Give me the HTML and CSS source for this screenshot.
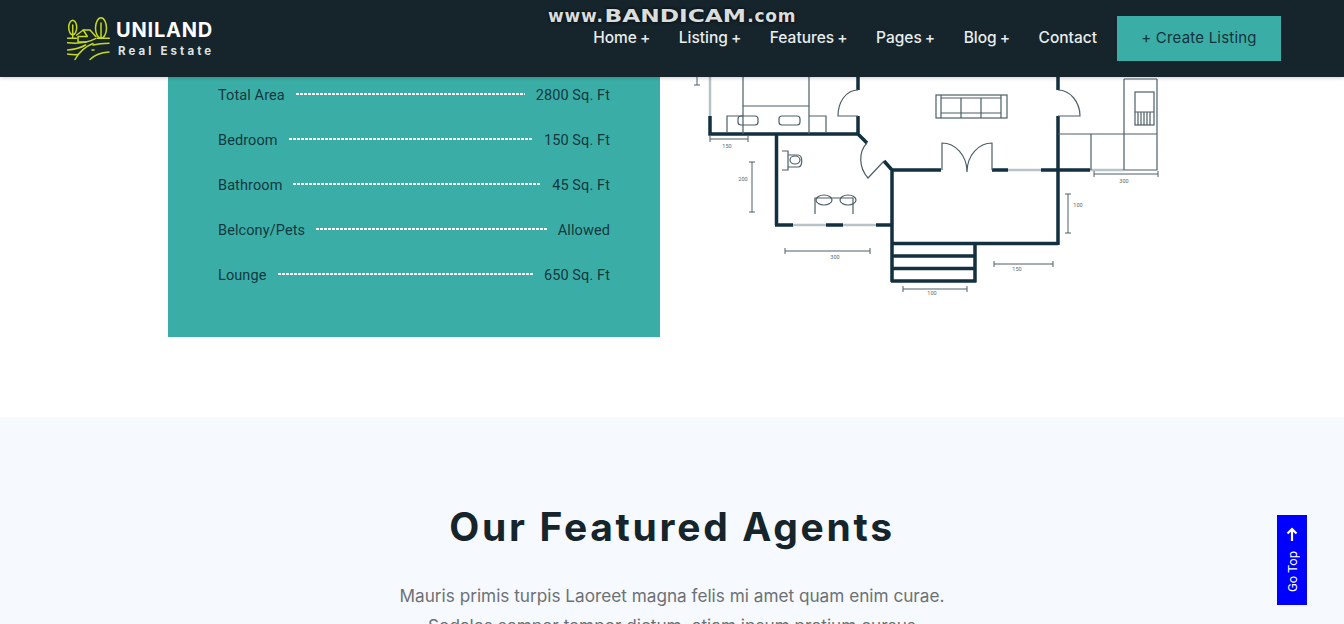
FILE: index.html
```html
<!DOCTYPE html>
<html lang="en">
<head>
    <meta charset="UTF-8">
    <meta name="viewport" content="width=device-width, initial-scale=1.0">
    <title>Uniland Real Estate</title>
    <link rel="stylesheet" href="styles.css">
</head>
<body>
    <header class="site-header">
        <a class="logo" href="#">
            <svg class="logo-icon" viewBox="0 0 44 44" fill="none" stroke="#c6d91c" stroke-width="1.500" stroke-linecap="round" stroke-linejoin="round">
                <ellipse cx="5.700" cy="10.500" rx="4" ry="7.300"></ellipse>
                <path d="M5.700 8v13"></path>
                <ellipse cx="34" cy="11" rx="5.500" ry="10.200"></ellipse>
                <path d="M34 6v15"></path>
                <path d="M9.700 18l6.600-5H23l6 6.700"></path>
                <path d="M16.300 13l4 6.500H11v5.500h8"></path>
                <path d="M0.500 21.300h9M30 21.300h12.300"></path>
                <path d="M0.500 25.700c9 1 19 .5 28-4"></path>
                <path d="M26 28c5-1.200 10-1.700 16-1.700"></path>
                <path d="M0.500 33c6-.5 13-2 18-5"></path>
                <path d="M0.500 37c4 .5 7 1 10 .5"></path>
                <path d="M8 42.500c4-7 10-13 18-16"></path>
                <path d="M23 42.500c4-4 11-7 19-7.500"></path>
                <path d="M25 33h2"></path>
            </svg>
            <span class="logo-text">
                <strong>UNILAND</strong>
                <small>Real Estate</small>
            </span>
        </a>
        <nav class="main-nav">
            <a href="#">Home<i>+</i></a>
            <a href="#">Listing<i>+</i></a>
            <a href="#">Features<i>+</i></a>
            <a href="#">Pages<i>+</i></a>
            <a href="#">Blog<i>+</i></a>
            <a href="#">Contact</a>
        </nav>
        <a class="create-btn" href="#">+ Create Listing</a>
        <div class="watermark"><b>www.</b><b class="brand">BANDICAM</b><b>.com</b></div>
    </header>

    <section class="plan-section">
        <div class="area-panel">
            <div class="area-row"><span>Total Area</span><i></i><span>2800 Sq. Ft</span></div>
            <div class="area-row"><span>Bedroom</span><i></i><span>150 Sq. Ft</span></div>
            <div class="area-row"><span>Bathroom</span><i></i><span>45 Sq. Ft</span></div>
            <div class="area-row"><span>Belcony/Pets</span><i></i><span>Allowed</span></div>
            <div class="area-row"><span>Lounge</span><i></i><span>650 Sq. Ft</span></div>
        </div>

        <!-- coordinates in the viewBox are page coordinates -->
        <svg class="floor-plan" viewBox="690 77 500 300" fill="none">
            <g stroke="#12303f" stroke-width="3.500">
                <path d="M710 116V134H858M858 77V90M858 116V134L867 143"></path>
                <path d="M776.500 134V225M775 225H793M826 225H843M876 225H892"></path>
                <path d="M884 161L892 170V282M892 170H941M992 170H1008M1041 170H1090"></path>
                <path d="M1058 77V90M1058 116V245M892 243.500H1058"></path>
                <path d="M892 256H975M892 268.500H975M891 281H976.500M975 243V282"></path>
            </g>
            <g stroke="#b9c2c6" stroke-width="2.500">
                <path d="M710 77V116M793 225H826M843 225H876M1008 170H1041M1090 170H1124"></path>
            </g>
            <g stroke="#4d5f68" stroke-width="1.200">
                <path d="M858 90C846 90 838 102 838 116H858"></path>
                <path d="M867 143C858 152 859 168 868 178L884 161"></path>
                <path d="M942 170V143C955 143 967 155 967 172C967 155 979 143 992 143V170"></path>
                <path d="M1058 90C1070 90 1080 102 1080 116H1058"></path>
                <path d="M743 77V134M809 77V134M743 106H809"></path>
                <path d="M727 133V116H743M809 116H826V133"></path>
                <rect x="738" y="116" width="20" height="9" rx="3"></rect>
                <rect x="779" y="116" width="21" height="9" rx="3"></rect>
                <path d="M782 151H788V170H782"></path>
                <path d="M788 155H798C803 155 803 167 798 167H788"></path>
                <ellipse cx="795" cy="160" rx="5" ry="4"></ellipse>
                <ellipse cx="824" cy="200" rx="8" ry="5"></ellipse>
                <ellipse cx="848" cy="200" rx="8" ry="5"></ellipse>
                <path d="M815 214V198H853V214"></path>
                <rect x="936" y="95" width="71" height="23"></rect>
                <path d="M941 95V118M961 98V118M981 98V118M1001 95V118M941 98H1001M941 113H1001"></path>
                <path d="M1058 134H1157M1091 134V170M1124 79V170M1157 79V170H1124M1124 79H1157"></path>
                <rect x="1135" y="92" width="19" height="33"></rect>
                <path d="M1135 112H1154M1138 112V125M1141 112V125M1144 112V125M1147 112V125M1150 112V125"></path>
            </g>
            <g stroke="#4d5f68" stroke-width="1">
                <path d="M697 77V85M694 85H700"></path>
                <path d="M710 139H748M710 136V142M748 136V142"></path>
                <path d="M752 162V212M749 162H755M749 212H755"></path>
                <path d="M785 251H870M785 248V254M870 248V254"></path>
                <path d="M903 289H967M903 286V292M967 286V292"></path>
                <path d="M1094 174H1158M1094 171V177M1158 171V177"></path>
                <path d="M1068 194V233M1065 194H1071M1065 233H1071"></path>
                <path d="M994 264H1053M994 261V267M1053 261V267"></path>
            </g>
            <g class="plan-label">
                <text x="727" y="148">150</text>
                <text x="743" y="181">200</text>
                <text x="835" y="259">300</text>
                <text x="932" y="295">100</text>
                <text x="1124" y="183">300</text>
                <text x="1078" y="207">100</text>
                <text x="1017" y="271">150</text>
            </g>
        </svg>
    </section>

    <section class="agents-section">
        <h2>Our Featured Agents</h2>
        <p>Mauris primis turpis Laoreet magna felis mi amet quam enim curae.<br>Sodales semper tempor dictum, etiam ipsum pretium cursus</p>
    </section>

    <a class="go-top" href="#">
        <svg viewBox="0 0 12 14" fill="none" stroke="#fff" stroke-width="2.200">
            <path d="M6 14V2M1.500 6.500L6 2l4.500 4.500"></path>
        </svg>
        <span>Go Top</span>
    </a>
</body>
</html>
```

FILE: styles.css
```css
* {
    margin: 0;
    padding: 0;
    box-sizing: border-box;
}

body, html {
    width: 100%;
    height: 100%;
    overflow: hidden;
    background-color: #fff;
    font-family: Inter, "Noto Sans", sans-serif;
}

a {
    text-decoration: none;
    color: inherit;
}

/* Header */
.site-header {
    position: relative;
    z-index: 5;
    display: flex;
    align-items: center;
    gap: 20px;
    height: 77px;
    padding: 0 63px 0 67px;
    background-color: #16242b;
    box-shadow: 0 1px 4px rgba(0, 0, 0, 0.2);
}

.logo {
    display: flex;
    align-items: center;
    gap: 5px;
    margin-right: auto;
    color: #fff;
}

.logo-icon {
    width: 44px;
    height: 44px;
}

.logo-text {
    display: flex;
    flex-direction: column;
    gap: 3px;
    margin-top: -1px;
}

.logo-text strong {
    font-size: 20px;
    line-height: 22px;
    font-weight: 700;
    letter-spacing: 0.800px;
}

.logo-text small {
    padding-left: 2px;
    font-size: 11.500px;
    line-height: 14px;
    font-weight: 700;
    letter-spacing: 3.100px;
    color: #dfe3e4;
}

.main-nav {
    display: flex;
    gap: 28.500px;
    margin-bottom: 3px;
    color: #e8edee;
    font-size: 15.500px;
    font-weight: 500;
}

.main-nav i {
    margin-left: 3px;
    font-style: normal;
}

.create-btn {
    display: flex;
    align-items: center;
    justify-content: center;
    width: 164px;
    height: 45px;
    padding-bottom: 2px;
    background-color: #3aaea6;
    color: #12333c;
    font-size: 15px;
    letter-spacing: 0.200px;
}

.watermark {
    position: absolute;
    top: 5px;
    left: 548px;
    display: flex;
    align-items: baseline;
    color: #d9dddd;
    font-family: "DejaVu Sans", sans-serif;
    font-size: 17px;
    letter-spacing: 0.800px;
    text-shadow: 0 0 3px #000;
}

.watermark .brand {
    margin: 0 16px 0 15px;
    font-size: 18.500px;
    letter-spacing: 0;
    transform: scaleX(1.260);
}

/* Floor plan */
.plan-section {
    display: flex;
    gap: 30px;
    height: 340px;
    padding-left: 168px;
}

.area-panel {
    width: 492px;
    height: 260px;
    padding: 6px 50px 0;
    background-color: #3aaea6;
}

.area-row {
    display: flex;
    align-items: center;
    gap: 11px;
    height: 24px;
    margin-bottom: 21px;
    color: #14383f;
    font-family: Roboto, sans-serif;
    font-size: 14.500px;
    letter-spacing: 0.100px;
}

.area-row i {
    flex: 1;
    height: 2px;
    margin-top: -3px;
    background-image: repeating-linear-gradient(90deg, #fff 0, #fff 3px, transparent 3px, transparent 4px);
}

.floor-plan {
    width: 500px;
    height: 300px;
}

.plan-label text {
    fill: #5c6a70;
    font-family: Roboto, sans-serif;
    font-size: 5.500px;
    text-anchor: middle;
}

/* Agents */
.agents-section {
    height: 207px;
    padding-top: 84px;
    background-color: #f6f9fd;
    text-align: center;
}

.agents-section h2 {
    color: #16242b;
    font-size: 39px;
    line-height: 52px;
    font-weight: 700;
    letter-spacing: 2.700px;
}

.agents-section p {
    margin-top: 28px;
    color: #6c7176;
    font-size: 17.200px;
    line-height: 30px;
}

.go-top {
    position: fixed;
    top: 515px;
    right: 37px;
    display: flex;
    flex-direction: column;
    align-items: center;
    gap: 10px;
    width: 30px;
    height: 90px;
    padding-top: 12px;
    background-color: #00f;
    color: #fff;
}

.go-top svg {
    width: 12px;
    height: 14px;
}

.go-top span {
    writing-mode: vertical-rl;
    transform: rotate(180deg);
    font-family: Roboto, sans-serif;
    font-size: 13px;
}
```
